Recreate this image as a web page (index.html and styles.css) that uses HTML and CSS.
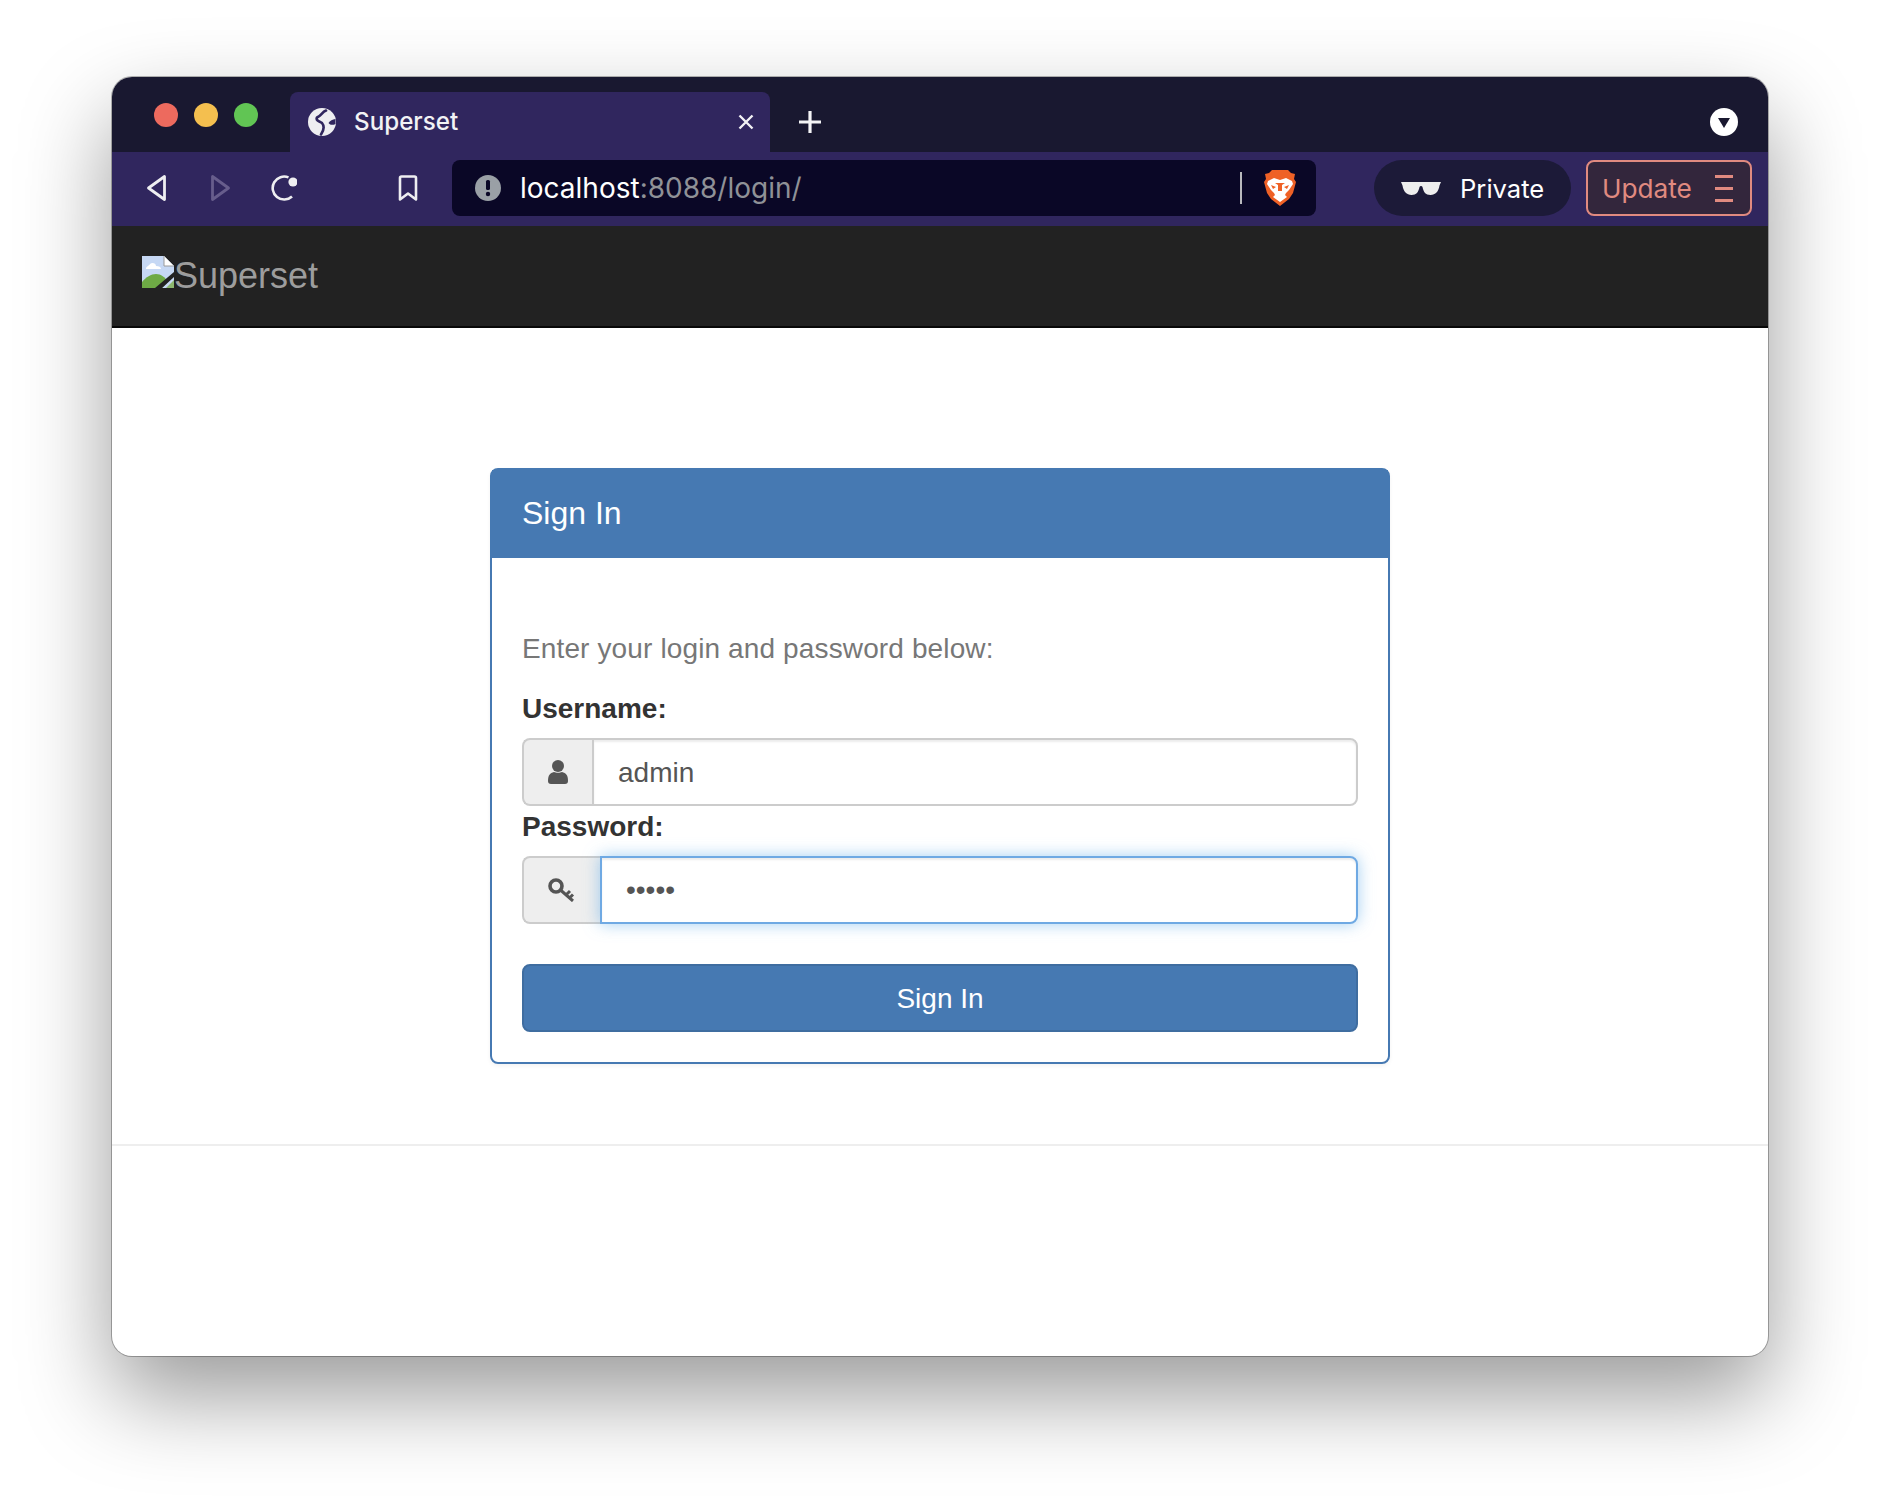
FILE: index.html
```html
<!DOCTYPE html>
<html>
    <head>
        <meta charset="utf-8">
        <title>Superset</title>
        <link rel="stylesheet" href="styles.css">
    </head>
    <body>
        <div class="window">
            <div class="tabstrip">
                <div class="lights">
                    <span class="light light-red"></span>
                    <span class="light light-yellow"></span>
                    <span class="light light-green"></span>
                </div>
                <div class="tab">
                    <svg class="tab-globe" viewBox="0 0 28 28">
                        <circle cx="14" cy="14" r="14" fill="#eeeef1"/>
                        <path d="M18 2.500C14 4 13.500 7.500 9 9.500 7.500 12 11 13.500 14 15 16.500 18 16 22 13 26.500" fill="none" stroke="#30265e" stroke-width="2.600" stroke-linecap="round"/>
                        <path d="M27.500 11C24.500 11.500 22 12.500 20.500 15 22 17 24.500 17.500 27.500 16z" fill="#30265e"/>
                    </svg>
                    <span class="tab-title">Superset</span>
                    <svg class="tab-close" viewBox="0 0 16 16">
                        <path d="M1.500 1.500l13 13M14.500 1.500l-13 13" stroke="#f2f2f5" stroke-width="2.400" fill="none"/>
                    </svg>
                </div>
                <svg class="tab-new" viewBox="0 0 24 24">
                    <path d="M12 1v22M1 12h22" stroke="#f4f4f6" stroke-width="3.200" fill="none"/>
                </svg>
                <svg class="tab-menu" viewBox="0 0 28 28">
                    <circle cx="14" cy="14" r="14" fill="#fff"/>
                    <path d="M8 10h12l-6 10z" fill="#191830"/>
                </svg>
            </div>
            <div class="toolbar">
                <svg class="tool tool-back" viewBox="0 0 19 26">
                    <path d="M17.500 1.500v23L1.500 13z" fill="none" stroke="#eeeef1" stroke-width="2.800" stroke-linejoin="round"/>
                </svg>
                <svg class="tool tool-forward" viewBox="0 0 19 26">
                    <path d="M1.500 1.500v23L17.500 13z" fill="none" stroke="#675d8c" stroke-width="2.800" stroke-linejoin="round"/>
                </svg>
                <svg class="tool tool-reload" viewBox="0 0 26 26">
                    <path d="M17.500 2.400A11.500 11.500 0 1 0 21 21.500" fill="none" stroke="#eeeef1" stroke-width="2.600"/>
                    <circle cx="22" cy="7" r="4.600" fill="#eeeef1"/>
                </svg>
                <svg class="tool tool-bookmark" viewBox="0 0 20 26">
                    <path d="M2 3a1.500 1.500 0 0 1 1.500-1.500h13A1.500 1.500 0 0 1 18 3v21.500l-8-6-8 6z" fill="none" stroke="#eeeef1" stroke-width="2.600" stroke-linejoin="round"/>
                </svg>
                <div class="urlbar">
                    <svg class="url-alert" viewBox="0 0 26 26">
                        <circle cx="13" cy="13" r="13" fill="#9aa0a6"/>
                        <rect x="11" y="5" width="4" height="10" rx="1.600" fill="#0a0726"/>
                        <circle cx="13" cy="19" r="2.200" fill="#0a0726"/>
                    </svg>
                    <span class="url-text">localhost<span class="url-dim">:8088/login/</span></span>
                    <span class="url-sep"></span>
                    <svg class="url-lion" viewBox="0 0 32 36">
                        <path d="M8 0h16l3 3 4 1-1 5 2 3-3 11-4 6-9 7-9-7-4-6L0 12l2-3-1-5 4-1z" fill="#ef6126"/>
                        <path d="M4 11l6-3 6 2 6-2 6 3 1 3-4 6-3 3-1 2 2 2-7 5-7-5 2-2-1-2-3-3-4-6z" fill="#fff"/>
                        <path d="M11 13h10l-3 2v6h-4v-6zM7 15l5 2-3 2zM25 15l-5 2 3 2z" fill="#ef6126"/>
                    </svg>
                </div>
                <div class="private">
                    <svg class="private-glasses" viewBox="0 0 40 14">
                        <path d="M0 1h40l-1.500 3.500c-1 6-4 9.500-9 9.500s-7-3-8-8c-.5-1.500-2.500-1.500-3 0-1 5-3 8-8 8s-8-3.500-9-9.500z" fill="#eeeeee"/>
                    </svg>
                    <span>Private</span>
                </div>
                <div class="update">
                    <span>Update</span>
                    <span class="update-lines"><i></i><i></i><i></i></span>
                </div>
            </div>
            <div class="navbar">
                <span class="brand">
                    <svg class="brand-broken" viewBox="0 0 32 32">
                        <path d="M0 0h22l10 10v22H0z" fill="#c6d8f4"/>
                        <path d="M22 0l10 10H22z" fill="#fff"/>
                        <path d="M22 0v10h10" fill="none" stroke="#9a9a9a" stroke-width="1"/>
                        <path d="M4 13c0-3 3-3 4-5 2-2 6-1 6 2 3 0 5 1 5 3z" fill="#fff"/>
                        <path d="M0 32v-6c4-5 9-8 14-8 5 0 9 3 12 8l-6 6z" fill="#6eaa45"/>
                        <path d="M24 32l8-8v8z" fill="#8db86f"/>
                        <path d="M13 32L32 16v5L20 32z" fill="#222"/>
                    </svg><span class="brand-text">Superset</span>
                </span>
            </div>
            <div class="content">
                <div class="panel">
                    <div class="panel-heading">Sign In</div>
                    <div class="panel-body">
                        <p class="help">Enter your login and password below:</p>
                        <label class="field-label">Username:</label>
                        <div class="input-group">
                            <span class="addon">
                                <svg class="addon-user" viewBox="0 0 20 24">
                                    <circle cx="10" cy="6" r="6" fill="#555"/>
                                    <path d="M0 21c0-6 2-8 6-9 2 1 6 1 8 0 4 1 6 3 6 9 0 2-1 3-3 3H3c-2 0-3-1-3-3z" fill="#555"/>
                                </svg>
                            </span>
                            <input class="field" type="text" value="admin">
                        </div>
                        <label class="field-label">Password:</label>
                        <div class="input-group">
                            <span class="addon">
                                <svg class="addon-key" viewBox="0 0 28 24">
                                    <circle cx="8" cy="8" r="6" fill="none" stroke="#555" stroke-width="3.600"/>
                                    <path d="M12.500 12l12.500 11M18 17l4-4M21.500 20l3.500-3.500" fill="none" stroke="#555" stroke-width="3"/>
                                </svg>
                            </span>
                            <input class="field field-focus" type="password" value="admin">
                        </div>
                        <button class="submit">Sign In</button>
                    </div>
                </div>
                <hr class="rule">
            </div>
        </div>
    </body>
</html>
```

FILE: styles.css
```css
html, body {
    margin: 0;
    background: #fff;
}

body {
    height: 1504px;
    box-sizing: border-box;
    padding: 77px 112px 148px 112px;
    font-family: "Liberation Sans", Arial, sans-serif;
    overflow: hidden;
}

.window {
    height: 100%;
    display: flex;
    flex-direction: column;
    border-radius: 20px;
    overflow: hidden;
    background: #fff;
    box-shadow: 0 0 0 1px rgba(0, 0, 0, .28), 0 40px 90px rgba(0, 0, 0, .4);
}

/* tab strip */
.tabstrip {
    flex: none;
    height: 75px;
    display: flex;
    align-items: flex-end;
    padding-left: 42px;
    padding-right: 30px;
    background: #191830;
}

.lights {
    display: flex;
    gap: 16px;
    margin-bottom: 25px;
}

.light {
    width: 24px;
    height: 24px;
    border-radius: 50%;
}
.light-red { background: #ed6a5e; }
.light-yellow { background: #f4bf4f; }
.light-green { background: #61c554; }

.tab {
    width: 480px;
    height: 60px;
    box-sizing: border-box;
    margin-left: 32px;
    padding: 0 16px 0 18px;
    display: flex;
    align-items: center;
    border-radius: 8px 8px 0 0;
    background: #30265e;
    font-family: Inter, sans-serif;
    font-size: 24.2px;
    font-weight: 500;
    color: #f2f2f5;
}

.tab-globe {
    width: 28px;
    height: 28px;
    margin-right: 18px;
}
.tab-title {
    flex: 1;
    margin-bottom: 2px;
}
.tab-close {
    width: 16px;
    height: 16px;
}

.tab-new {
    width: 24px;
    height: 24px;
    margin: 0 0 18px 28px;
}

.tab-menu {
    width: 28px;
    height: 28px;
    margin: 0 0 16px auto;
}

/* toolbar */
.toolbar {
    flex: none;
    height: 74px;
    box-sizing: border-box;
    padding: 0 0 2px 35px;
    display: flex;
    align-items: center;
    background: #30265e;
    font-family: Inter, sans-serif;
}

.tool { height: 26px; flex: none; }
.tool-back { width: 19px; margin-right: 45px; }
.tool-forward { width: 19px; margin-right: 41px; }
.tool-reload { width: 26px; margin-right: 101px; }
.tool-bookmark { width: 20px; margin-right: 34px; }

.urlbar {
    width: 864px;
    height: 56px;
    box-sizing: border-box;
    margin-right: 58px;
    padding-left: 23px;
    display: flex;
    align-items: center;
    border-radius: 8px;
    background: #0a0726;
}

.url-alert {
    width: 26px;
    height: 26px;
    margin-right: 19px;
}

.url-text {
    flex: 1;
    font-size: 28px;
    color: #fff;
}
.url-dim { color: #8f9197; }

.url-sep {
    width: 2px;
    height: 32px;
    margin-right: 22px;
    background: #b9b9bd;
}

.url-lion {
    width: 32px;
    height: 36px;
    margin-right: 20px;
}

.private {
    width: 197px;
    height: 56px;
    box-sizing: border-box;
    margin-right: 15px;
    padding-left: 27px;
    display: flex;
    align-items: center;
    gap: 19px;
    border-radius: 28px;
    background: #1c1a38;
    font-size: 25.6px;
    color: #fff;
}
.private-glasses { width: 40px; height: 14px; }

.update {
    width: 166px;
    height: 56px;
    box-sizing: border-box;
    padding: 0 17px 0 14px;
    display: flex;
    align-items: center;
    justify-content: space-between;
    border: 2px solid #e08a80;
    border-radius: 8px;
    background: #33263c;
    font-size: 26.2px;
    color: #e08a80;
}

.update-lines {
    width: 18px;
    display: flex;
    flex-direction: column;
    gap: 9px;
}
.update-lines i {
    height: 3px;
    background: #e08a80;
}

/* page */
.navbar {
    flex: none;
    height: 102px;
    box-sizing: border-box;
    padding: 30px 0 0 30px;
    border-bottom: 2px solid #080808;
    background: #222;
}

.brand {
    display: flex;
    align-items: flex-start;
    font-size: 36px;
    line-height: 40px;
    color: #9d9d9d;
}
.brand-broken { width: 32px; height: 32px; flex: none; }

.content {
    flex: 1;
    padding-top: 140px;
}

.panel {
    width: 900px;
    box-sizing: border-box;
    margin: 0 auto;
    border: 2px solid #4679b2;
    border-radius: 8px;
    box-shadow: 0 2px 4px rgba(0, 0, 0, .05);
}

.panel-heading {
    height: 88px;
    box-sizing: border-box;
    padding: 0 30px 2px 30px;
    display: flex;
    align-items: center;
    background: #4679b2;
    font-size: 32px;
    color: #fff;
}

.panel-body {
    padding: 70px 30px 30px 30px;
    font-size: 28px;
    line-height: 40px;
    letter-spacing: .13px;
    color: #333;
}

.help {
    margin: 0 0 19px 0;
    padding-top: 1px;
    color: #777;
}

.field-label {
    display: block;
    margin-bottom: 9px;
    padding-top: 1px;
    font-weight: bold;
    letter-spacing: 0;
}

.input-group {
    display: flex;
    height: 68px;
}

.addon {
    flex: none;
    padding: 0 24px;
    display: flex;
    align-items: center;
    border: 2px solid #ccc;
    border-right: 0;
    border-radius: 8px 0 0 8px;
    background: #eee;
}
.addon-user { width: 20px; height: 24px; }
.addon-key { width: 28px; height: 24px; }

.field {
    flex: 1;
    min-width: 0;
    box-sizing: border-box;
    padding: 2px 24px 0 24px;
    border: 2px solid #ccc;
    border-radius: 0 8px 8px 0;
    outline: 0;
    font-family: "Liberation Sans", Arial, sans-serif;
    font-size: 28px;
    color: #555;
    box-shadow: inset 0 2px 2px rgba(0, 0, 0, .075);
}

.field-focus {
    position: relative;
    padding-top: 0;
    border-color: #6fa9e3;
    box-shadow: inset 0 2px 2px rgba(0, 0, 0, .075), 0 0 16px rgba(102, 175, 233, .6);
}

.submit {
    display: block;
    width: 100%;
    height: 68px;
    margin-top: 40px;
    padding-top: 2px;
    border: 2px solid #3f6da0;
    border-radius: 8px;
    background: #4679b2;
    font-family: "Liberation Sans", Arial, sans-serif;
    font-size: 28px;
    color: #fff;
}

.rule {
    height: 2px;
    margin: 80px 0 0 0;
    border: 0;
    background: #eee;
}
```
